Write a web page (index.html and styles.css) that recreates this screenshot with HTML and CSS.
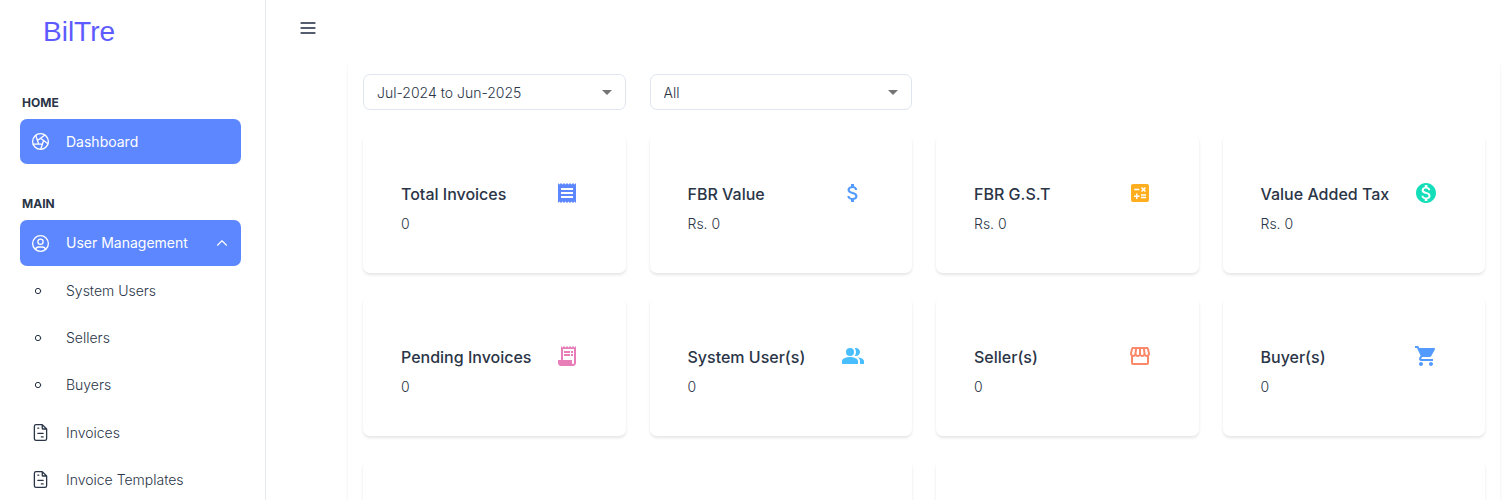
FILE: index.html
```
<!DOCTYPE html>
<html lang="en">
<head>
<meta charset="utf-8">
<meta name="viewport" content="width=device-width, initial-scale=1">
<title>BilTre</title>
<link rel="stylesheet" href="styles.css">
</head>
<body>
<div class="app">
  <aside class="sidebar">
    <a class="brand" href="#">BilTre</a>
    <nav class="nav">
      <h2 class="nav-heading">HOME</h2>
      <ul class="nav-list">
        <li><a class="nav-item active" href="#">
          <span class="nav-icon"><svg class="line-icon" viewBox="0 0 24 24"><circle cx="12" cy="12" r="9"/><path d="M3.6 15h10.55M6.551 4.938l3.26 10.034M17.032 4.636l-8.535 6.201M20.559 14.51l-8.535-6.201M12.257 20.916l3.261-10.034"/></svg></span>
          <span>Dashboard</span></a></li>
      </ul>
      <h2 class="nav-heading">MAIN</h2>
      <ul class="nav-list">
        <li>
          <button class="nav-item active" type="button" aria-expanded="true">
            <span class="nav-icon"><svg class="line-icon" viewBox="0 0 24 24"><circle cx="12" cy="12" r="9"/><circle cx="12" cy="10" r="3"/><path d="M6.168 18.849a4 4 0 0 1 3.832-2.849h4a4 4 0 0 1 3.834 2.855"/></svg></span>
            <span class="nav-label">User Management</span>
            <svg class="line-icon chevron" viewBox="0 0 24 24"><path d="M6 15l6-6l6 6"/></svg>
          </button>
          <ul class="nav-list sub-list">
            <li><a class="nav-item" href="#"><span class="nav-icon"><svg class="line-icon point" viewBox="0 0 24 24"><circle cx="12" cy="12" r="4"/></svg></span><span>System Users</span></a></li>
            <li><a class="nav-item" href="#"><span class="nav-icon"><svg class="line-icon point" viewBox="0 0 24 24"><circle cx="12" cy="12" r="4"/></svg></span><span>Sellers</span></a></li>
            <li><a class="nav-item" href="#"><span class="nav-icon"><svg class="line-icon point" viewBox="0 0 24 24"><circle cx="12" cy="12" r="4"/></svg></span><span>Buyers</span></a></li>
          </ul>
        </li>
        <li><a class="nav-item" href="#">
          <span class="nav-icon"><svg class="line-icon" viewBox="0 0 24 24"><path d="M14 3v4a1 1 0 0 0 1 1h4M17 21h-10a2 2 0 0 1-2-2v-14a2 2 0 0 1 2-2h7l5 5v11a2 2 0 0 1-2 2zM9 7h1M9 13h6M13 17h2"/></svg></span>
          <span>Invoices</span></a></li>
        <li><a class="nav-item" href="#">
          <span class="nav-icon"><svg class="line-icon" viewBox="0 0 24 24"><path d="M14 3v4a1 1 0 0 0 1 1h4M17 21h-10a2 2 0 0 1-2-2v-14a2 2 0 0 1 2-2h7l5 5v11a2 2 0 0 1-2 2zM9 7h1M9 13h6M13 17h2"/></svg></span>
          <span>Invoice Templates</span></a></li>
      </ul>
    </nav>
  </aside>

  <div class="page">
    <header class="topbar">
      <button class="menu-button" type="button" aria-label="Toggle menu"><svg class="line-icon menu-icon" viewBox="0 0 24 24"><path d="M4 6h16M4 12h16M4 18h16"/></svg></button>
    </header>
    <main class="panel">
      <div class="grid">
        <div class="field">
          <select class="select" aria-label="Fiscal year"><option>Jul-2024 to Jun-2025</option></select>
          <svg class="arrow" viewBox="0 0 24 24"><path d="M7 10l5 5 5-5z"/></svg>
        </div>
        <div class="field">
          <select class="select" aria-label="Filter"><option>All</option></select>
          <svg class="arrow" viewBox="0 0 24 24"><path d="M7 10l5 5 5-5z"/></svg>
        </div>
      </div>
      <div class="grid">
        <section class="card">
          <div class="card-head"><h3 class="card-title">Total Invoices</h3>
          <svg class="card-icon indigo" viewBox="0 0 24 24"><path d="M18 17H6v-2h12v2zm0-4H6v-2h12v2zm0-4H6V7h12v2zM3 22l1.5-1.5L6 22l1.5-1.5L9 22l1.5-1.5L12 22l1.5-1.5L15 22l1.5-1.5L18 22l1.5-1.5L21 22V2l-1.5 1.5L18 2l-1.5 1.5L15 2l-1.5 1.5L12 2l-1.5 1.5L9 2 7.5 3.5 6 2 4.5 3.5 3 2v20z"/></svg></div>
          <p class="card-value">0</p>
        </section>
        <section class="card">
          <div class="card-head"><h3 class="card-title">FBR Value</h3>
          <svg class="card-icon blue" viewBox="0 0 24 24"><path d="M11.8 10.9c-2.27-.59-3-1.2-3-2.15 0-1.09 1.01-1.85 2.7-1.85 1.78 0 2.44.85 2.5 2.1h2.21c-.07-1.72-1.12-3.3-3.21-3.81V3h-3v2.16c-1.94.42-3.5 1.68-3.5 3.61 0 2.31 1.91 3.46 4.7 4.13 2.5.6 3 1.48 3 2.41 0 .69-.49 1.79-2.7 1.79-2.06 0-2.87-.92-2.98-2.1h-2.2c.12 2.19 1.76 3.42 3.68 3.83V21h3v-2.15c1.95-.37 3.5-1.5 3.5-3.55 0-2.84-2.43-3.81-4.7-4.4z"/></svg></div>
          <p class="card-value">Rs. 0</p>
        </section>
        <section class="card">
          <div class="card-head"><h3 class="card-title">FBR G.S.T</h3>
          <svg class="card-icon amber" viewBox="0 0 24 24"><path d="M19 3H5c-1.1 0-2 .9-2 2v14c0 1.1.9 2 2 2h14c1.1 0 2-.9 2-2V5c0-1.1-.9-2-2-2zm-5.97 4.06L14.09 6l1.41 1.41L16.91 6l1.06 1.06-1.41 1.41 1.41 1.41-1.06 1.06-1.41-1.4-1.41 1.41-1.06-1.06 1.41-1.41-1.41-1.42zm-6.78.66h5v1.5h-5v-1.5zM11.5 16h-2v2H8v-2H6v-1.5h2v-2h1.5v2h2V16zm6.5 1.25h-5v-1.5h5v1.5zm0-2.5h-5v-1.5h5v1.5z"/></svg></div>
          <p class="card-value">Rs. 0</p>
        </section>
        <section class="card">
          <div class="card-head"><h3 class="card-title">Value Added Tax</h3>
          <svg class="card-icon teal" viewBox="0 0 24 24"><path d="M12 2C6.48 2 2 6.48 2 12s4.48 10 10 10 10-4.48 10-10S17.52 2 12 2zm1.41 16.09V20h-2.67v-1.93c-1.71-.36-3.16-1.46-3.27-3.4h1.96c.1 1.05.82 1.87 2.65 1.87 1.96 0 2.4-.98 2.4-1.59 0-.83-.44-1.61-2.67-2.14-2.48-.6-4.18-1.62-4.18-3.67 0-1.72 1.39-2.84 3.11-3.21V4h2.67v1.95c1.86.45 2.79 1.86 2.85 3.39H14.3c-.05-1.11-.64-1.87-2.22-1.87-1.5 0-2.4.68-2.4 1.64 0 .84.65 1.39 2.67 1.91s4.18 1.39 4.18 3.91c-.01 1.83-1.38 2.83-3.12 3.16z"/></svg></div>
          <p class="card-value">Rs. 0</p>
        </section>
        <section class="card">
          <div class="card-head"><h3 class="card-title">Pending Invoices</h3>
          <svg class="card-icon pink" viewBox="0 0 24 24"><path d="M19.5 3.5 18 2l-1.5 1.5L15 2l-1.5 1.5L12 2l-1.5 1.5L9 2 7.5 3.5 6 2v14H3v3c0 1.66 1.34 3 3 3h12c1.66 0 3-1.34 3-3V2l-1.5 1.5zM19 19c0 .55-.45 1-1 1s-1-.45-1-1v-3H8V5h11v14z"/><path d="M9 7h6v2H9zm7 0h2v2h-2zm-7 3h6v2H9zm7 0h2v2h-2z"/></svg></div>
          <p class="card-value">0</p>
        </section>
        <section class="card">
          <div class="card-head"><h3 class="card-title">System User(s)</h3>
          <svg class="card-icon sky" viewBox="0 0 24 24"><circle cx="9" cy="8" r="4"/><path d="M16.67 13.13C18.04 14.06 19 15.32 19 17v3h4v-3c0-2.18-3.57-3.47-6.33-3.87zM15 12c2.21 0 4-1.79 4-4s-1.79-4-4-4c-.47 0-.91.1-1.33.24C14.5 5.27 15 6.58 15 8s-.5 2.73-1.33 3.76c.42.14.86.24 1.33.24zM9 13c-2.67 0-8 1.34-8 4v3h16v-3c0-2.66-5.33-4-8-4z"/></svg></div>
          <p class="card-value">0</p>
        </section>
        <section class="card">
          <div class="card-head"><h3 class="card-title">Seller(s)</h3>
          <svg class="card-icon coral" viewBox="0 0 24 24"><path d="M21.9 8.89l-1.05-4.37c-.22-.9-1-1.52-1.91-1.52H5.05c-.9 0-1.69.63-1.9 1.52L2.1 8.89c-.24 1.02-.02 2.06.62 2.88.08.11.19.19.28.29V19c0 1.1.9 2 2 2h14c1.1 0 2-.9 2-2v-6.94c.09-.09.2-.18.28-.28.64-.82.87-1.87.62-2.89zm-2.99-3.9l1.05 4.37c.1.42.01.84-.25 1.17-.14.18-.44.47-.94.47-.61 0-1.14-.49-1.21-1.14L16.98 5l1.93-.01zM13 5h1.96l.54 4.52c.05.39-.07.78-.33 1.07-.22.26-.54.41-.95.41-.67 0-1.22-.59-1.22-1.31V5zM8.49 9.52L9.04 5H11v4.69c0 .72-.55 1.31-1.29 1.31-.34 0-.65-.15-.89-.41-.25-.29-.37-.68-.33-1.07zm-4.45-.16L5.05 5h1.97l-.58 4.86c-.08.65-.6 1.14-1.21 1.14-.49 0-.8-.29-.93-.47-.27-.32-.36-.75-.26-1.17zM5 19v-6.03c.08.01.15.03.23.03.87 0 1.66-.36 2.24-.95.6.6 1.4.95 2.31.95.87 0 1.65-.36 2.23-.93.59.57 1.39.93 2.29.93.84 0 1.64-.35 2.24-.95.58.59 1.37.95 2.24.95.08 0 .15-.02.23-.03V19H5z"/></svg></div>
          <p class="card-value">0</p>
        </section>
        <section class="card">
          <div class="card-head"><h3 class="card-title">Buyer(s)</h3>
          <svg class="card-icon blue" viewBox="0 0 24 24"><path d="M7 18c-1.1 0-1.99.9-1.99 2S5.9 22 7 22s2-.9 2-2-.9-2-2-2zM1 2v2h2l3.6 7.59-1.35 2.45c-.16.28-.25.61-.25.96 0 1.1.9 2 2 2h12v-2H7.42c-.14 0-.25-.11-.25-.25l.03-.12.9-1.63h7.45c.75 0 1.41-.41 1.75-1.03l3.58-6.49c.08-.14.12-.31.12-.48 0-.55-.45-1-1-1H5.21l-.94-2H1zm16 16c-1.1 0-1.99.9-1.99 2s.89 2 1.99 2 2-.9 2-2-.9-2-2-2z"/></svg></div>
          <p class="card-value">0</p>
        </section>
        <section class="card wide"></section>
        <section class="card wide"></section>
      </div>
    </main>
  </div>
</div>
</body>
</html>
```
FILE: styles.css
```
*, *::before, *::after { box-sizing: border-box; }

body {
  margin: 0;
  background: #fff;
  color: #2a3547;
  font-family: Inter, "Liberation Sans", sans-serif;
  font-size: 14px;
  font-weight: 300;
  line-height: 20px;
}

h2, h3, p, ul { margin: 0; padding: 0; }
ul { list-style: none; }
button, select { font: inherit; color: inherit; }
svg { display: block; flex: none; }

.app {
  display: flex;
  height: 100vh;
  overflow: hidden;
}

/* Sidebar */
.sidebar {
  flex: none;
  width: 266px;
  padding: 0 24px 0 20px;
  border-right: 1px solid #e5eaef;
  overflow: hidden;
}

.brand {
  display: block;
  padding: 16px 0 16px 23px;
  color: #5d5bff;
  font-family: "Liberation Sans", Arial, sans-serif;
  font-size: 28px;
  font-weight: 400;
  line-height: 32px;
  text-decoration: none;
}

.nav-heading {
  padding: 29px 2px 6px;
  font-size: 12px;
  font-weight: 700;
  line-height: 20px;
}

.nav-list + .nav-heading { padding-top: 30px; }

.nav-item {
  display: flex;
  align-items: center;
  gap: 15px;
  width: 100%;
  height: 47px;
  padding: 0 10px;
  border: 0;
  border-radius: 7px;
  background: none;
  color: #2a3547;
  text-align: left;
  text-decoration: none;
}

.nav-item.active {
  height: 45px;
  background: #5d87ff;
  color: #fff;
  font-weight: 400;
}

button.nav-item.active { height: 46px; }
.nav-icon { width: 21px; }
.nav-label { flex: 1; }
.sub-list { padding: 1px 0; }

.line-icon {
  width: 21px;
  height: 21px;
  fill: none;
  stroke: currentColor;
  stroke-width: 1.5;
  stroke-linecap: round;
  stroke-linejoin: round;
}

.line-icon.point { width: 16px; height: 16px; }
.line-icon.chevron { width: 18px; height: 18px; }

/* Page */
.page { flex: 1; min-width: 0; }

.topbar {
  display: flex;
  align-items: center;
  height: 56px;
  padding: 0 24px;
}

.menu-button {
  display: grid;
  place-items: center;
  width: 36px;
  height: 36px;
  padding: 0;
  border: 0;
  background: none;
  color: #545e70;
}

.line-icon.menu-icon { width: 20px; height: 20px; stroke-width: 2.4; }

.panel {
  display: grid;
  gap: 24px;
  margin: 3px 5px 0 82px;
  padding: 15px;
  border-radius: 7px;
  box-shadow: 0 2px 3px rgba(0, 0, 0, 0.08);
}

.grid {
  display: grid;
  grid-template-columns: repeat(4, minmax(0, 1fr));
  gap: 24px;
}

.field { position: relative; }

.select {
  display: block;
  width: 100%;
  height: 36px;
  padding: 2px 32px 0 13px;
  border: 1px solid #dfe5ef;
  border-radius: 7px;
  background: transparent;
  appearance: none;
}

.arrow {
  position: absolute;
  top: 6px;
  right: 7px;
  width: 24px;
  height: 24px;
  fill: #757575;
  pointer-events: none;
}

.card {
  padding: 47px 47px 39px 38px;
  border-radius: 7px;
  box-shadow: 0 2px 3px rgba(0, 0, 0, 0.1);
}

.card.wide { grid-column: span 2; min-height: 320px; }

.card-head {
  display: flex;
  align-items: flex-start;
  justify-content: space-between;
}

.card-title {
  font-size: 16px;
  font-weight: 500;
  line-height: 26px;
  white-space: nowrap;
}

.card-value { margin-top: 6px; line-height: 21px; }

.card-icon { width: 24px; height: 24px; fill: currentColor; }
.indigo { color: #5d87ff; }
.blue { color: #539bff; }
.amber { color: #ffae1f; }
.teal { color: #13deb9; }
.pink { color: #e77eb8; }
.sky { color: #49beff; }
.coral { color: #fa896b; }
```
